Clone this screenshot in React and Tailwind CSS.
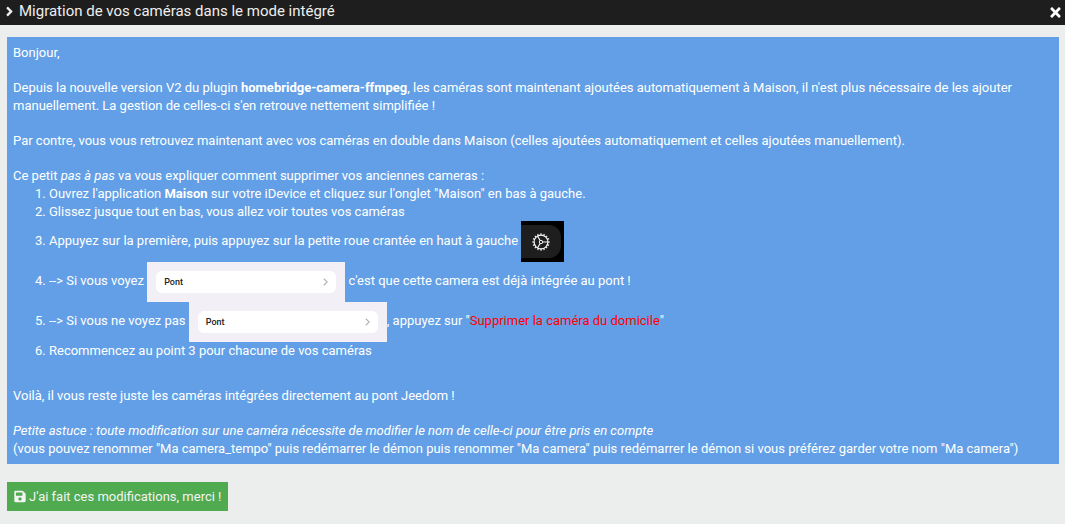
import { FaAngleRight, FaSave, FaTimes } from "react-icons/fa";

function BridgeRow() {
  return (
    <span className="inline-block h-10 w-[198px] bg-[#f2eff7] p-[9px] align-middle">
      <span className="flex h-[22px] items-center justify-between rounded-md bg-white px-2 text-[9px] font-medium text-[#222222]">
        Pont
        <svg className="h-2 w-[5px]" viewBox="0 0 5 8" fill="none" stroke="#b4b4b8" strokeWidth="1.2">
          <path d="M0.8 0.8L4.2 4L0.8 7.2" />
        </svg>
      </span>
    </span>
  );
}

const teeth = Array.from({ length: 16 }, (_, i) => i * 22.5);

function GearTile() {
  return (
    <span className="inline-block h-[41px] w-[43px] bg-black py-1 pr-[3px] align-middle">
      <span className="flex h-[33px] items-center justify-center rounded-r-xl bg-[#1e1e1f]">
        <svg className="h-[18px] w-[18px]" viewBox="0 0 18 18" fill="none" stroke="#f4f4f4" strokeWidth="1.2">
          <circle cx="9" cy="9" r="6.9" />
          <circle cx="9" cy="9" r="1.7" strokeWidth="1" />
          <path d="M10.7 9H15.9M8.1 7.5L5.5 3M8.1 10.5L5.5 15" />
          {teeth.map((a) => (
            <path key={a} d="M9 2.2V0.3" transform={`rotate(${a} 9 9)`} />
          ))}
        </svg>
      </span>
    </span>
  );
}

export default function App() {
  return (
    <div className="min-h-screen bg-[#eceeed] font-[Roboto,sans-serif] text-[13px] leading-[18px] text-white">
      <header className="flex items-stretch justify-between bg-[#1e1e1e] px-1 text-[#eeeeee]">
        <div className="flex items-center gap-1 pb-[3px]">
          <FaAngleRight className="h-[15px] w-[11px]" aria-hidden="true" />
          <h1 className="text-[15px] leading-[22px]">Migration de vos caméras dans le mode intégré</h1>
        </div>
        <button type="button" aria-label="Fermer" className="text-white">
          <FaTimes className="h-[15px] w-[11px]" />
        </button>
      </header>
      <main className="pt-3 pr-1.5 pl-[7px]">
        <section className="bg-[#639fe6] px-1.5 pt-[7px] pb-1.5">
          <p className="mb-[17px]">Bonjour,</p>
          <p className="mb-[17px]">
            Depuis la nouvelle version V2 du plugin <b>homebridge-camera-ffmpeg</b>, les caméras sont maintenant
            ajoutées automatiquement à Maison, il n'est plus nécessaire de les ajouter manuellement. La gestion de
            celles-ci s'en retrouve nettement simplifiée !
          </p>
          <p className="mb-[17px]">
            Par contre, vous vous retrouvez maintenant avec vos caméras en double dans Maison (celles ajoutées
            automatiquement et celles ajoutées manuellement).
          </p>
          <p>
            Ce petit <i>pas à pas</i> va vous expliquer comment supprimer vos anciennes cameras :
          </p>
          <ol className="mb-[27px] list-decimal pl-9">
            <li>
              Ouvrez l'application <b>Maison</b> sur votre iDevice et cliquez sur l'onglet "Maison" en bas à gauche.
            </li>
            <li>Glissez jusque tout en bas, vous allez voir toutes vos caméras</li>
            <li>
              Appuyez sur la première, puis appuyez sur la petite roue crantée en haut à gauche <GearTile />
            </li>
            <li>
              --&gt; Si vous voyez <BridgeRow /> c'est que cette camera est déjà intégrée au pont !
            </li>
            <li>
              --&gt; Si vous ne voyez pas <BridgeRow />, appuyez sur "
              <span className="text-[#ff0000]">Supprimer la caméra du domicile</span>"
            </li>
            <li>Recommencez au point 3 pour chacune de vos caméras</li>
          </ol>
          <p className="mb-[17px]">Voilà, il vous reste juste les caméras intégrées directement au pont Jeedom !</p>
          <p>
            <i>
              Petite astuce : toute modification sur une caméra nécessite de modifier le nom de celle-ci pour être
              pris en compte
            </i>
            <br />
            (vous pouvez renommer "Ma camera_tempo" puis redémarrer le démon puis renommer "Ma camera" puis
            redémarrer le démon si vous préférez garder votre nom "Ma camera")
          </p>
        </section>
        <button
          type="button"
          className="mt-[18px] flex h-[29px] items-center gap-[3px] bg-[#50aa50] px-[7px] text-[#f4f4f4]"
        >
          <FaSave className="h-[13px] w-3" aria-hidden="true" />
          J'ai fait ces modifications, merci !
        </button>
      </main>
    </div>
  );
}
